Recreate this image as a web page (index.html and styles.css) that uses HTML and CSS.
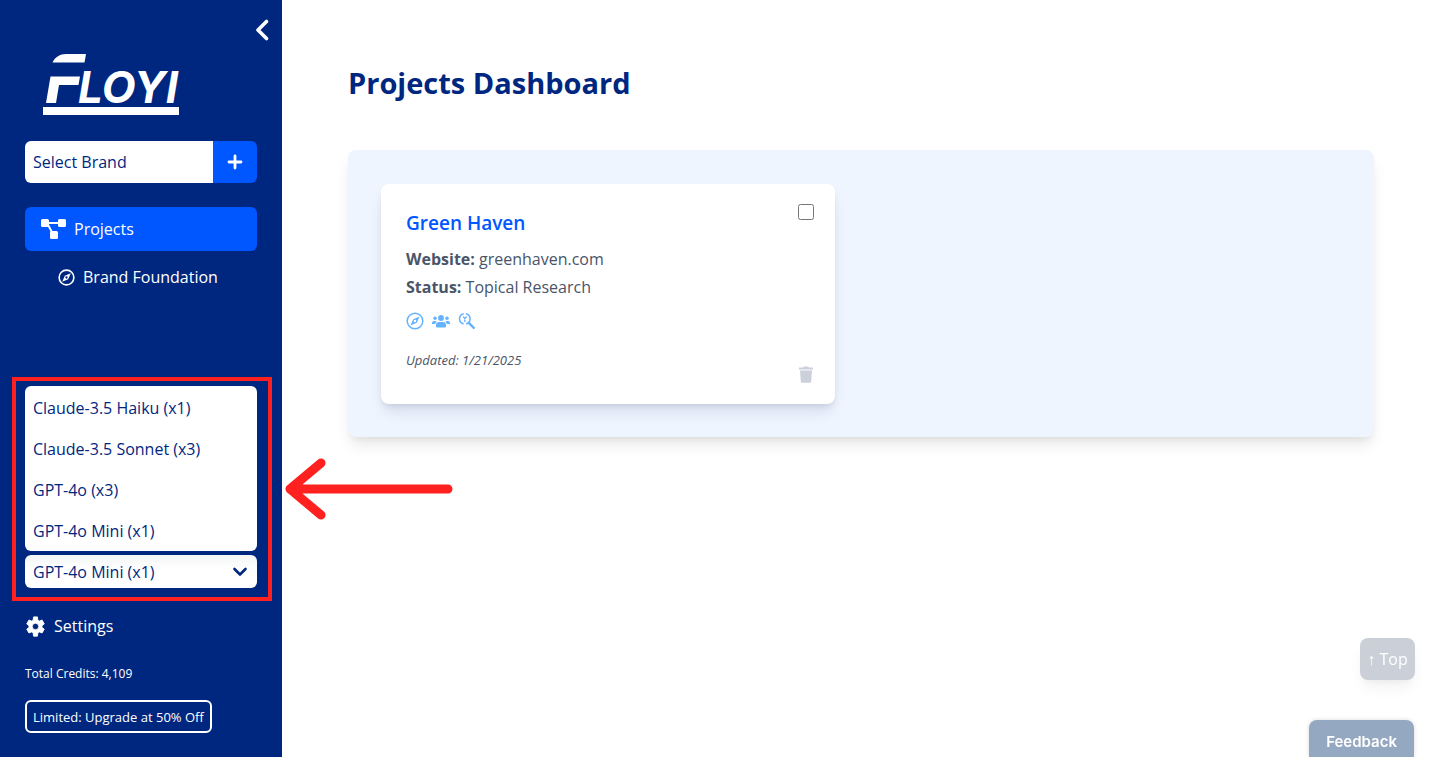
FILE: index.html
```html
<!DOCTYPE html>
<html lang="en">
<head>
    <meta charset="UTF-8">
    <meta name="viewport" content="width=device-width, initial-scale=1.0">
    <title>Floyi - Projects Dashboard</title>
    <link rel="stylesheet" href="styles.css">
</head>
<body>
    <div class="layout">
        <aside class="sidebar">
            <button class="collapse-button" type="button" aria-label="Collapse sidebar">
                <svg width="14" height="22" viewBox="0 0 14 22"><path d="M11.500 2.500 L3 11 L11.500 19.500" fill="none" stroke="#fff" stroke-width="3.600" stroke-linecap="round" stroke-linejoin="round"/></svg>
            </button>

            <a class="logo" href="#" aria-label="Floyi">
                <svg width="138" height="64" viewBox="0 0 138 64" fill="#fff">
                    <path d="M9.500 10.500 C12 5 17 2 23 2 H43 L41.500 10.500 Z"/>
                    <path d="M7.500 24.500 H37 L35.500 33 H16 L13 51 H3 Z"/>
                    <text class="logo-text" x="35" y="51">LOYI</text>
                    <rect x="0" y="55" width="136" height="8"/>
                </svg>
            </a>

            <div class="brand-picker">
                <input class="brand-input" type="text" placeholder="Select Brand" aria-label="Select Brand">
                <button class="brand-add" type="button" aria-label="Add brand">
                    <svg width="16" height="16" viewBox="0 0 16 16"><path d="M8 2 V14 M2 8 H14" stroke="#fff" stroke-width="2.800" stroke-linecap="round"/></svg>
                </button>
            </div>

            <nav class="nav">
                <a class="nav-item active" href="#">
                    <svg width="25" height="22" viewBox="0 0 25 22" fill="#fff">
                        <path d="M5 5 H20 M6 5 L12 16" stroke="#fff" stroke-width="2"/>
                        <rect x="0" y="1" width="8" height="8" rx="1.500"/>
                        <rect x="17" y="1" width="8" height="8" rx="1.500"/>
                        <rect x="9" y="13" width="8" height="8" rx="1.500"/>
                    </svg>
                    Projects
                </a>
                <a class="nav-item sub" href="#">
                    <svg width="17" height="17" viewBox="0 0 18 18">
                        <circle cx="9" cy="9" r="7.800" fill="none" stroke="#fff" stroke-width="1.700"/>
                        <path fill-rule="evenodd" d="M13.500 4.500 L10.800 10.800 L4.500 13.500 L7.200 7.200 Z M9 7.800 A1.200 1.200 0 1 0 9 10.200 A1.200 1.200 0 1 0 9 7.800 Z" fill="#fff"/>
                    </svg>
                    Brand Foundation
                </a>
            </nav>

            <div class="sidebar-bottom">
                <div class="model-picker">
                    <ul class="model-list">
                        <li><button type="button">Claude-3.5 Haiku (x1)</button></li>
                        <li><button type="button">Claude-3.5 Sonnet (x3)</button></li>
                        <li><button type="button">GPT-4o (x3)</button></li>
                        <li><button type="button">GPT-4o Mini (x1)</button></li>
                    </ul>
                    <div class="model-current">
                        <select class="model-select" aria-label="AI model">
                            <option>GPT-4o Mini (x1)</option>
                        </select>
                        <svg class="model-chevron" width="16" height="10" viewBox="0 0 16 10"><path d="M2.500 2 L8 7.500 L13.500 2" fill="none" stroke="#00277f" stroke-width="2.600" stroke-linecap="round" stroke-linejoin="round"/></svg>
                    </div>
                    <div class="highlight">
                        <svg class="highlight-arrow" width="168" height="62" viewBox="0 0 168 62"><path d="M163 31 H6 M36 5 L5 31 L36 57" fill="none" stroke="#ff2020" stroke-width="9" stroke-linecap="round" stroke-linejoin="round"/></svg>
                    </div>
                </div>

                <a class="settings" href="#">
                    <svg width="21" height="21" viewBox="0 0 24 24" fill="#fff"><path d="M19.400 13a7.500 7.500 0 0 0 0-2l2.600-2-2.500-4.400-3 1.200a7.700 7.700 0 0 0-1.800-1L14.200 1H9.800l-.5 3.800a7.700 7.700 0 0 0-1.800 1l-3-1.200L2 9l2.600 2a7.500 7.500 0 0 0 0 2L2 15l2.500 4.400 3-1.200a7.700 7.700 0 0 0 1.800 1l.5 3.800h4.400l.5-3.800a7.700 7.700 0 0 0 1.800-1l3 1.200L22 15zM12 15.700a3.700 3.700 0 1 1 0-7.400 3.700 3.700 0 0 1 0 7.400z" stroke="#fff" stroke-width="1" stroke-linejoin="round"/></svg>
                    Settings
                </a>
                <p class="credits">Total Credits: 4,109</p>
                <button class="upgrade-button" type="button">Limited: Upgrade at 50% Off</button>
            </div>
        </aside>

        <main class="main">
            <h1 class="page-title">Projects Dashboard</h1>
            <section class="projects">
                <article class="card">
                    <div class="card-info">
                        <h2 class="card-title">Green Haven</h2>
                        <p class="card-row"><strong>Website:</strong> greenhaven.com</p>
                        <p class="card-row"><strong>Status:</strong> Topical Research</p>
                        <div class="card-icons">
                            <svg width="18" height="18" viewBox="0 0 18 18">
                                <circle cx="9" cy="9" r="7.800" fill="none" stroke="#63b3ff" stroke-width="1.500"/>
                                <path fill-rule="evenodd" d="M13.500 4.500 L10.800 10.800 L4.500 13.500 L7.200 7.200 Z M9 7.800 A1.200 1.200 0 1 0 9 10.200 A1.200 1.200 0 1 0 9 7.800 Z" fill="#63b3ff"/>
                            </svg>
                            <svg width="18" height="18" viewBox="0 0 18 18" fill="#63b3ff">
                                <circle cx="9" cy="6" r="2.900"/>
                                <circle cx="3" cy="6.200" r="1.700"/>
                                <circle cx="15" cy="6.200" r="1.700"/>
                                <path d="M4 14.500 V13 Q4 10 7 10 H11 Q14 10 14 13 V14.500 Q14 15.500 13 15.500 H5 Q4 15.500 4 14.500 Z"/>
                                <path d="M0 12 V11 Q0 9 2 9 H3.500 Q4.300 9 4.700 9.500 Q3.400 10.500 3.200 12 Z M18 12 V11 Q18 9 16 9 H14.500 Q13.700 9 13.300 9.500 Q14.600 10.500 14.800 12 Z"/>
                            </svg>
                            <svg width="18" height="18" viewBox="0 0 18 18" fill="none" stroke="#63b3ff">
                                <path d="M5.700 11.900 A5.200 5.200 0 0 1 5.700 1.700 M7.900 1.700 A5.200 5.200 0 0 1 7.900 11.900" stroke-width="1.500"/>
                                <path d="M10.800 10.800 L15.800 15.800" stroke-width="2.400" stroke-linecap="round"/>
                                <path d="M5.300 4.500 L6.800 6.800 L8.500 4.500 M6.800 6.500 V10" stroke-width="1.300"/>
                            </svg>
                        </div>
                        <p class="card-updated">Updated: 1/21/2025</p>
                    </div>
                    <div class="card-actions">
                        <input class="card-check" type="checkbox" aria-label="Select Green Haven">
                        <button class="card-delete" type="button" aria-label="Delete Green Haven">
                            <svg width="16" height="18" viewBox="0 0 16 18" fill="#cbd0da"><path d="M1 1.500 H5 L6 0.500 H10 L11 1.500 H15 V3.500 H1 Z M2 4.500 H14 L13.200 15.500 Q13.100 16.800 11.800 16.800 H4.200 Q2.900 16.800 2.800 15.500 Z"/></svg>
                        </button>
                    </div>
                </article>
            </section>
        </main>
    </div>

    <button class="top-button" type="button">↑ Top</button>
    <button class="feedback-button" type="button">Feedback</button>
</body>
</html>
```
FILE: styles.css
```css
* {
    box-sizing: border-box;
}

body {
    margin: 0;
    font-family: "Segoe UI", "Open Sans", "Noto Sans", sans-serif;
    font-size: 16px;
    line-height: 24px;
    color: #4a5568;
    background-color: #fff;
}

h1, h2, p, ul {
    margin: 0;
    padding: 0;
}

button, input, select {
    font: inherit;
}

button {
    padding: 0;
    border: none;
    background: none;
    cursor: pointer;
}

a {
    color: inherit;
    text-decoration: none;
}

svg {
    display: block;
    flex-shrink: 0;
}

.layout {
    display: flex;
    min-height: 100vh;
}

/* Sidebar */
.sidebar {
    display: flex;
    flex-direction: column;
    flex-shrink: 0;
    width: 282px;
    padding: 19px 25px 24px;
    background-color: #00277f;
    color: #fff;
}

.collapse-button {
    align-self: flex-end;
    margin-right: -12px;
}

.logo {
    margin: 11px 0 25px 18px;
}

.logo-text {
    font-family: Inter, sans-serif;
    font-size: 44px;
    font-weight: 700;
    font-style: italic;
}

.brand-picker {
    display: flex;
    height: 42px;
    border-radius: 6px;
    overflow: hidden;
}

.brand-input {
    flex: 1;
    min-width: 0;
    padding: 0 8px;
    border: none;
    background-color: #fff;
    color: #00277f;
}

.brand-input::placeholder {
    color: #00277f;
    opacity: 1;
}

.brand-add {
    display: flex;
    justify-content: center;
    align-items: center;
    width: 44px;
    background-color: #0057ff;
}

.nav {
    display: flex;
    flex-direction: column;
    gap: 4px;
    margin-top: 24px;
}

.nav-item {
    display: flex;
    align-items: center;
    gap: 8px;
    height: 44px;
    padding: 0 16px;
    border-radius: 6px;
}

.nav-item.active {
    background-color: #0057ff;
}

.nav-item.sub {
    padding-left: 33px;
}

.sidebar-bottom {
    display: flex;
    flex-direction: column;
    align-items: flex-start;
    margin-top: auto;
}

.model-picker {
    position: relative;
    display: flex;
    flex-direction: column;
    gap: 4px;
    width: 100%;
}

.model-list {
    padding-top: 1px;
    list-style: none;
    border-radius: 6px;
    background-color: #fff;
}

.model-list button {
    width: 100%;
    height: 41px;
    padding: 0 8px;
    color: #00277f;
    text-align: left;
}

.model-list li {
    height: 41px;
}

.model-current {
    position: relative;
}

.model-select {
    display: block;
    width: 100%;
    height: 33px;
    padding: 0 8px;
    border: none;
    border-radius: 6px;
    appearance: none;
    background: linear-gradient(#f3f4f4, #fff 14px);
    color: #00277f;
}

.model-chevron {
    position: absolute;
    top: 12px;
    right: 9px;
    pointer-events: none;
}

.highlight {
    position: absolute;
    inset: -9px -15px -13px -13px;
    border: 4px solid #ff2020;
    pointer-events: none;
}

.highlight-arrow {
    position: absolute;
    top: 50%;
    left: 100%;
    margin-left: 17px;
    transform: translateY(-50%);
}

.settings {
    display: flex;
    align-items: center;
    gap: 8px;
    margin-top: 26px;
}

.credits {
    margin-top: 26px;
    font-size: 12px;
    line-height: 20px;
}

.upgrade-button {
    height: 33px;
    margin-top: 16px;
    padding: 0 6px;
    border: 2px solid #fff;
    border-radius: 6px;
    color: #fff;
    font-size: 13px;
}

/* Main content */
.main {
    flex: 1;
    padding: 63px 66px;
}

.page-title {
    color: #00277f;
    font-size: 29px;
    font-weight: 700;
    line-height: 40px;
}

.projects {
    display: grid;
    grid-template-columns: repeat(2, 1fr);
    gap: 52px;
    margin-top: 47px;
    padding: 34px 33px 33px;
    border-radius: 8px;
    background-color: #eef5ff;
    box-shadow: 0 10px 15px -3px rgba(0, 0, 0, 0.1), 0 4px 6px -2px rgba(0, 0, 0, 0.05);
}

.card {
    display: flex;
    justify-content: space-between;
    padding: 20px 21px 20px 25px;
    border-radius: 8px;
    background-color: #fff;
    box-shadow: 0 10px 15px -3px rgba(0, 20, 80, 0.1), 0 4px 6px -2px rgba(0, 0, 40, 0.1);
}

.card-info {
    padding: 5px 0 14px;
}

.card-title {
    margin-bottom: 8px;
    color: #0057ff;
    font-size: 19px;
    font-weight: 600;
    line-height: 28px;
}

.card-row {
    line-height: 28px;
}

.card-icons {
    display: flex;
    gap: 8px;
    margin: 11px 0 20px;
}

.card-updated {
    font-size: 13px;
    font-style: italic;
    line-height: 20px;
}

.card-actions {
    display: flex;
    flex-direction: column;
    justify-content: space-between;
    align-items: center;
}

.card-check {
    width: 16px;
    height: 16px;
    margin: 0;
}

.top-button,
.feedback-button {
    position: fixed;
    right: 25px;
    color: #fff;
}

.top-button {
    bottom: 77px;
    width: 55px;
    height: 42px;
    border-radius: 8px;
    background-color: #cbd0d8;
    box-shadow: 0 10px 15px -3px rgba(0, 0, 0, 0.06), 0 4px 6px -2px rgba(0, 0, 0, 0.04);
}

.feedback-button {
    right: 26px;
    bottom: 0;
    height: 37px;
    padding: 6px 17px 0;
    border-radius: 8px 8px 0 0;
    background-color: #94a8c1;
    box-shadow: 0 0 4px rgba(0, 0, 0, 0.15);
    font-family: Inter, sans-serif;
    font-size: 15px;
    font-weight: 600;
}
```
